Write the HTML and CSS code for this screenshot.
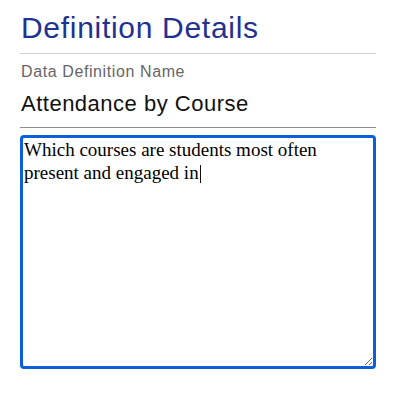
FILE: index.html
```html
<!DOCTYPE html>
<html lang="en">
<head>
<meta charset="utf-8">
<title>Definition Details</title>
<link rel="stylesheet" href="styles.css">
</head>
<body>
<main class="panel">
  <h1 class="title">Definition Details</h1>
  <div class="field">
    <div class="label">Data Definition Name</div>
    <div class="value">Attendance by Course</div>
  </div>
  <div class="description" role="textbox" aria-multiline="true">Which courses are students most often present and engaged in<span class="caret"></span></div>
</main>
</body>
</html>
```
FILE: styles.css
```css
html, body {
  margin: 0;
  padding: 0;
  background: #ffffff;
}

.panel {
  width: 356px;
  padding: 0 24px 0 20px;
  font-family: "Liberation Sans", Arial, sans-serif;
}

.title {
  margin: 11px 0 0 0;
  padding: 0 0 8px 1px;
  font-size: 30px;
  line-height: 34px;
  font-weight: normal;
  letter-spacing: 0.7px;
  color: #1f3290;
  border-bottom: 1px solid #d2d2d2;
}

.field {
  padding-top: 8px;
  border-bottom: 1px solid #8c8c8c;
}

.label {
  padding-left: 1px;
  font-size: 16px;
  line-height: 20px;
  letter-spacing: 0.6px;
  color: #666666;
}

.value {
  margin-top: 10px;
  padding: 0 0 11px 1px;
  font-size: 22px;
  line-height: 24px;
  letter-spacing: 0.5px;
  color: #111111;
}

.description {
  box-sizing: border-box;
  margin-top: 7px;
  height: 234px;
  border: 3px solid #0b5fd9;
  border-radius: 4px;
  padding: 0 2px 0 1px;
  font-family: "Liberation Serif", "Times New Roman", serif;
  font-size: 19px;
  line-height: 23px;
  color: #000000;
  overflow: auto;
  resize: both;
}

.caret {
  display: inline-block;
  width: 1.5px;
  height: 18px;
  margin-left: 1px;
  vertical-align: -4px;
  background: #111111;
}
```
